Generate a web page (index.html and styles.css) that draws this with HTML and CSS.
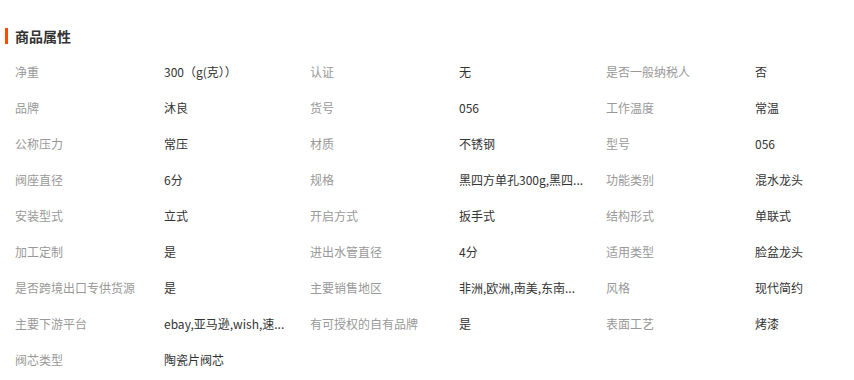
FILE: index.html
```html
<!DOCTYPE html>
<html lang="zh">
<head>
<meta charset="utf-8">
<link rel="stylesheet" href="styles.css">
</head>
<body>
<div class="attrs">
  <h2 class="attrs-title">商品属性</h2>
  <div class="attrs-grid">
    <div class="label">净重</div><div class="value">300（g(克））</div>
    <div class="label">认证</div><div class="value">无</div>
    <div class="label">是否一般纳税人</div><div class="value">否</div>

    <div class="label">品牌</div><div class="value">沐良</div>
    <div class="label">货号</div><div class="value">056</div>
    <div class="label">工作温度</div><div class="value">常温</div>

    <div class="label">公称压力</div><div class="value">常压</div>
    <div class="label">材质</div><div class="value">不锈钢</div>
    <div class="label">型号</div><div class="value">056</div>

    <div class="label">阀座直径</div><div class="value">6分</div>
    <div class="label">规格</div><div class="value">黑四方单孔300g,黑四...</div>
    <div class="label">功能类别</div><div class="value">混水龙头</div>

    <div class="label">安装型式</div><div class="value">立式</div>
    <div class="label">开启方式</div><div class="value">扳手式</div>
    <div class="label">结构形式</div><div class="value">单联式</div>

    <div class="label">加工定制</div><div class="value">是</div>
    <div class="label">进出水管直径</div><div class="value">4分</div>
    <div class="label">适用类型</div><div class="value">脸盆龙头</div>

    <div class="label">是否跨境出口专供货源</div><div class="value">是</div>
    <div class="label">主要销售地区</div><div class="value">非洲,欧洲,南美,东南...</div>
    <div class="label">风格</div><div class="value">现代简约</div>

    <div class="label">主要下游平台</div><div class="value">ebay,亚马逊,wish,速...</div>
    <div class="label">有可授权的自有品牌</div><div class="value">是</div>
    <div class="label">表面工艺</div><div class="value">烤漆</div>

    <div class="label">阀芯类型</div><div class="value">陶瓷片阀芯</div>
  </div>
</div>
</body>
</html>
```
FILE: styles.css
```css
html, body {
  margin: 0;
  padding: 0;
  background: #fff;
}
body {
  font-family: "Microsoft YaHei", "Noto Sans CJK SC", "Noto Sans", sans-serif;
  font-size: 12px;
  color: #333;
}
.attrs {
  padding-top: 28px;
}
.attrs-title {
  margin: 0 0 0 5px;
  padding-left: 7px;
  border-left: 3px solid #ff4a00;
  font-size: 14px;
  font-weight: bold;
  color: #333;
  line-height: 16px;
  height: 16px;
}
.attrs-grid {
  margin-top: 9px;
  padding-left: 15px;
  display: grid;
  grid-template-columns: 149px 146px 149px 147px 149px 1fr;
  grid-auto-rows: 36px;
  align-items: center;
}
.label {
  color: #999;
  white-space: nowrap;
}
.value {
  color: #333;
  white-space: nowrap;
}
```
